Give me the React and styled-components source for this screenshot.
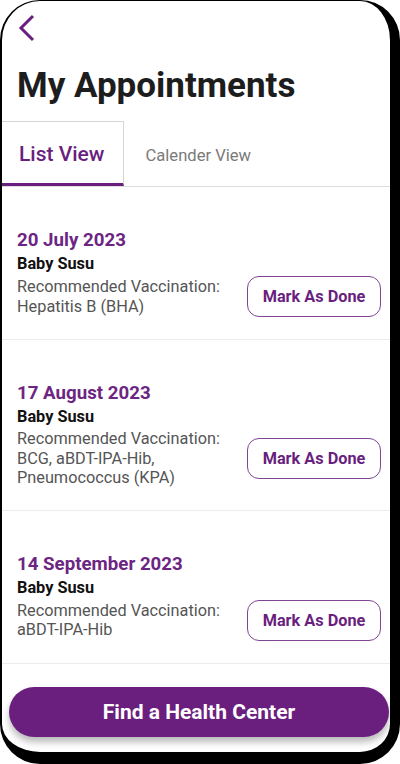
import React, { useState } from "react";
import styled, { createGlobalStyle } from "styled-components";

const purple = "#6a1f7f";

const GlobalStyle = createGlobalStyle`
  * { box-sizing: border-box; }
  body {
    margin: 0;
    background: #ffffff;
    font-family: Roboto, "Liberation Sans", sans-serif;
  }
`;

const Frame = styled.div`
  width: 400px;
  height: 764px;
  border-style: solid;
  border-color: #000;
  border-width: 1px 10px 12px 2px;
  border-radius: 40px;
  background: #fff;
  overflow: hidden;
  display: flex;
  flex-direction: column;
`;

const Header = styled.div`
  padding: 13px 15px 0;
`;

const Back = styled.button`
  border: none;
  background: none;
  padding: 0;
  display: block;
  cursor: pointer;
`;

const Title = styled.h1`
  margin: 21px 0 0;
  font-size: 35px;
  line-height: 40px;
  font-weight: 700;
  color: #1d1d1d;
`;

const Tabs = styled.div`
  margin-top: 15px;
  display: flex;
  border-bottom: 1px solid #dcdcdc;
`;

const Tab = styled.button`
  height: 65px;
  border: none;
  background: #fff;
  font-family: inherit;
  cursor: pointer;
  padding: ${(p) => (p.$active ? "3px 19px 0 17px" : "4px 21px 0")};
  font-size: ${(p) => (p.$active ? "21px" : "16.6px")};
  font-weight: ${(p) => (p.$active ? 500 : 400)};
  color: ${(p) => (p.$active ? purple : "#7a7a7a")};
  border-top: ${(p) => (p.$active ? "1px solid #d6d6d6" : "none")};
  border-right: ${(p) => (p.$active ? "1px solid #d6d6d6" : "none")};
  border-bottom: ${(p) => (p.$active ? `3px solid ${purple}` : "none")};
  margin-bottom: ${(p) => (p.$active ? "-1px" : "0")};
`;

const List = styled.div`
  flex: 1;
`;

const Item = styled.div`
  padding: 41px 9px 22px 15px;
  border-bottom: 1px solid #ececec;
`;

const DateText = styled.div`
  font-size: 18.7px;
  line-height: 24px;
  font-weight: 700;
  color: #6d2583;
`;

const Name = styled.div`
  font-size: 16.3px;
  line-height: 24px;
  font-weight: 700;
  color: #111;
`;

const Row = styled.div`
  display: flex;
  align-items: center;
  justify-content: space-between;
`;

const Desc = styled.div`
  font-size: 16.3px;
  line-height: 19.5px;
  color: #555;
  width: 215px;
`;

const DoneButton = styled.button`
  width: 134px;
  height: 41px;
  border: 1.5px solid #7d4592;
  border-radius: 12px;
  background: #fff;
  color: ${purple};
  font-family: inherit;
  font-size: 16.3px;
  font-weight: 700;
  cursor: pointer;
`;

const Footer = styled.div`
  padding: 0 1px 15px 7px;
`;

const MainButton = styled.button`
  width: 100%;
  height: 50px;
  border: none;
  border-radius: 25px;
  background: ${purple};
  color: #fff;
  font-family: inherit;
  font-size: 21px;
  font-weight: 700;
  box-shadow: 0 5px 7px rgba(0, 0, 0, 0.28);
  cursor: pointer;
`;

const appointments = [
  {
    date: "20 July 2023",
    name: "Baby Susu",
    lines: ["Recommended Vaccination:", "Hepatitis B (BHA)"],
  },
  {
    date: "17 August 2023",
    name: "Baby Susu",
    lines: ["Recommended Vaccination:", "BCG, aBDT-IPA-Hib,", "Pneumococcus (KPA)"],
  },
  {
    date: "14 September 2023",
    name: "Baby Susu",
    lines: ["Recommended Vaccination:", "aBDT-IPA-Hib"],
  },
];

export default function App() {
  const [tab, setTab] = useState("list");
  return (
    <>
      <GlobalStyle />
      <Frame>
        <Header>
          <Back aria-label="Back">
            <svg width="20" height="28" viewBox="0 0 20 28">
              <path d="M16 2 L4 14 L16 26" fill="none" stroke={purple} strokeWidth="3" />
            </svg>
          </Back>
          <Title>My Appointments</Title>
        </Header>
        <Tabs>
          <Tab $active={tab === "list"} onClick={() => setTab("list")}>List View</Tab>
          <Tab $active={tab === "cal"} onClick={() => setTab("cal")}>Calender View</Tab>
        </Tabs>
        <List>
          {appointments.map((a) => (
            <Item key={a.date}>
              <DateText>{a.date}</DateText>
              <Name>{a.name}</Name>
              <Row>
                <Desc>
                  {a.lines.map((l) => (
                    <div key={l}>{l}</div>
                  ))}
                </Desc>
                <DoneButton>Mark As Done</DoneButton>
              </Row>
            </Item>
          ))}
        </List>
        <Footer>
          <MainButton>Find a Health Center</MainButton>
        </Footer>
      </Frame>
    </>
  );
}
